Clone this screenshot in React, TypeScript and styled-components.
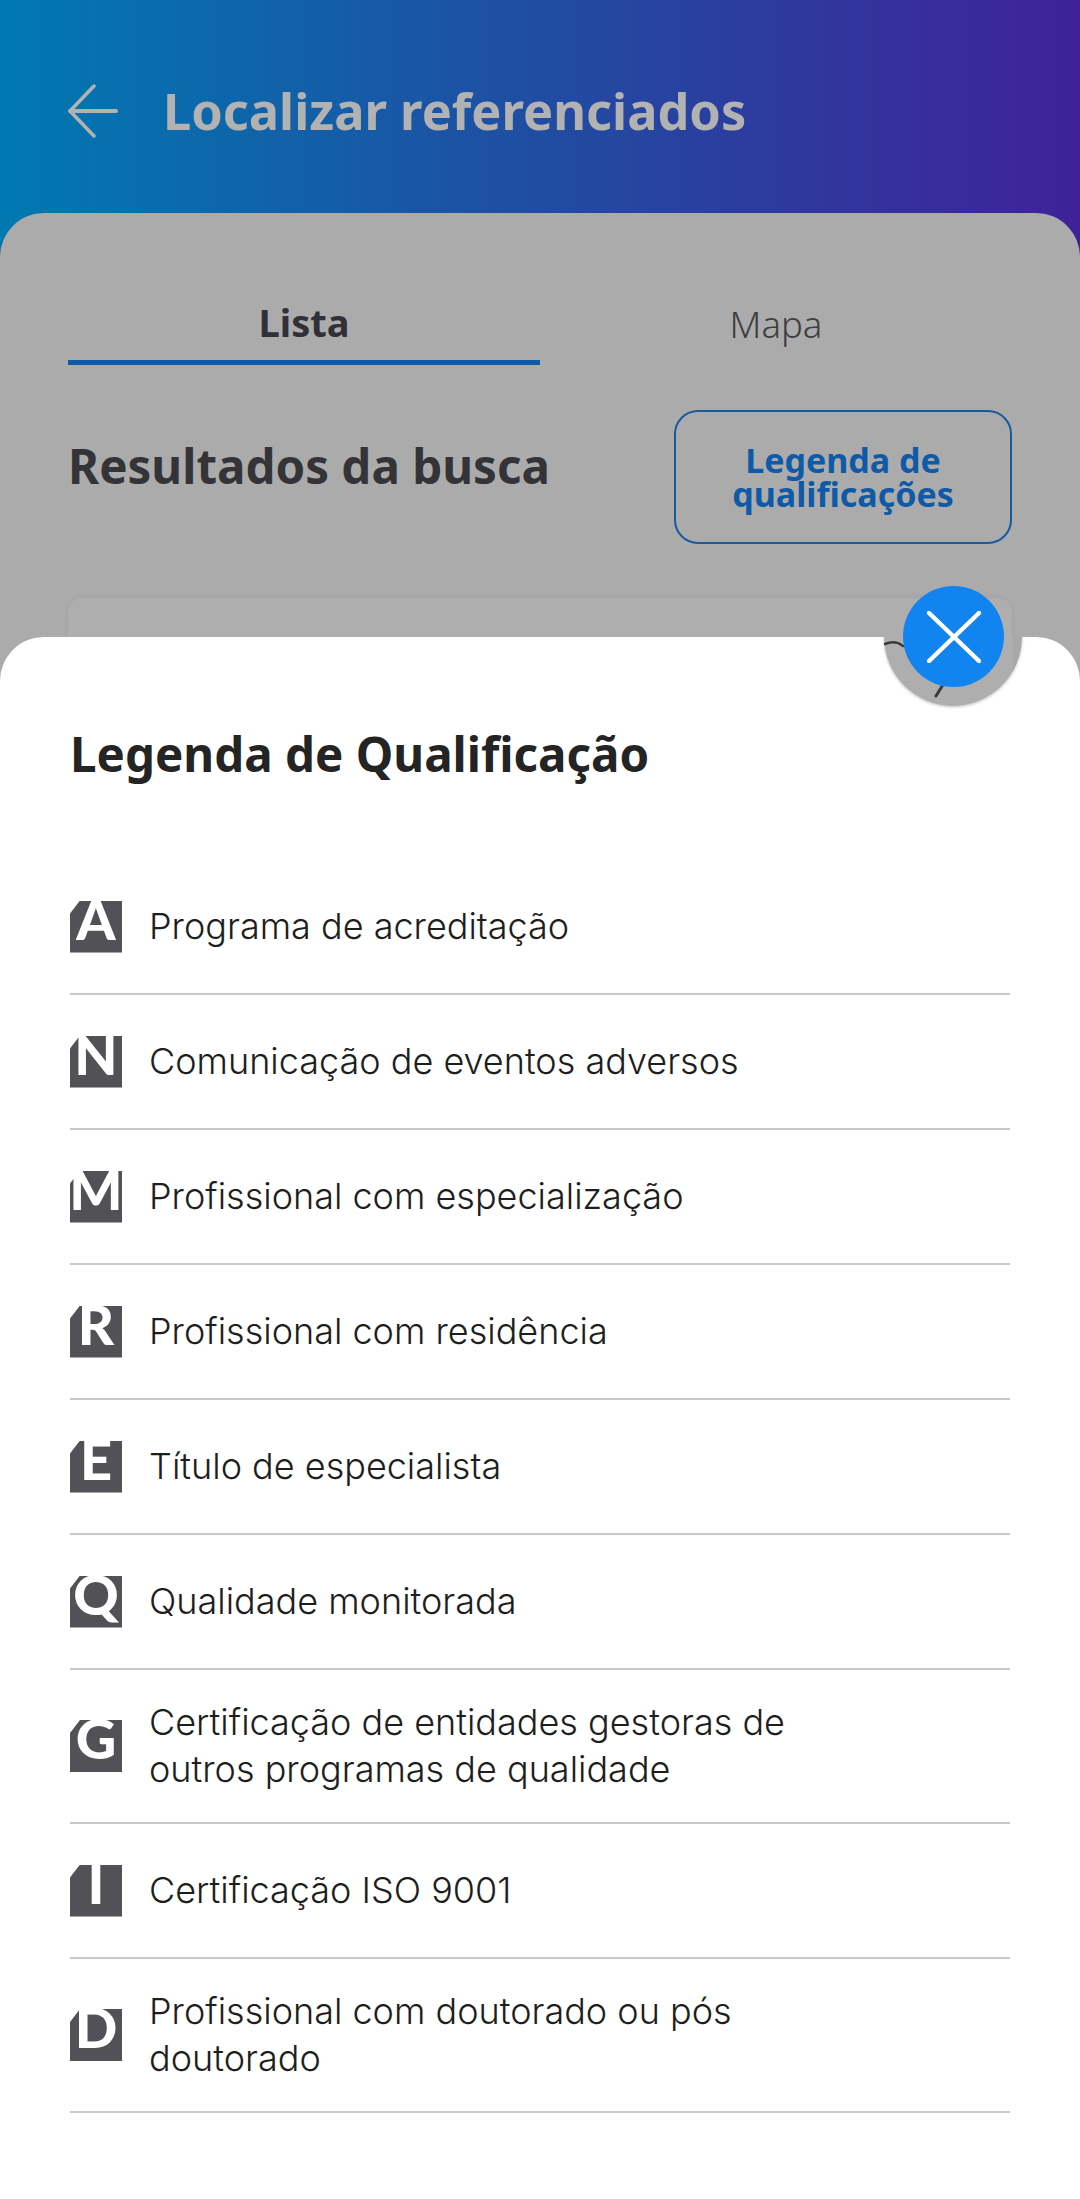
import React from 'react';
import styled, { createGlobalStyle } from 'styled-components';

const qualifications = [
  { letter: 'A', label: 'Programa de acreditação' },
  { letter: 'N', label: 'Comunicação de eventos adversos' },
  { letter: 'M', label: 'Profissional com especialização' },
  { letter: 'R', label: 'Profissional com residência' },
  { letter: 'E', label: 'Título de especialista' },
  { letter: 'Q', label: 'Qualidade monitorada' },
  { letter: 'G', label: 'Certificação de entidades gestoras de outros programas de qualidade' },
  { letter: 'I', label: 'Certificação ISO 9001' },
  { letter: 'D', label: 'Profissional com doutorado ou pós doutorado' },
];

const App: React.FC = () => {
  return (
    <Page>
      <GlobalStyle />
      <Header>
        <svg width="50" height="54" viewBox="0 0 50 54" fill="none" stroke="#b2b2b2" strokeWidth="3.5" strokeLinecap="round" strokeLinejoin="round">
          <path d="M26 2 L2 27 L26 52" />
          <path d="M2 27 H48" strokeWidth="4" />
        </svg>
        <HeaderTitle>Localizar referenciados</HeaderTitle>
      </Header>

      <Panel>
        <Tabs>
          <Tab $active>Lista</Tab>
          <Tab>Mapa</Tab>
        </Tabs>
        <ResultsRow>
          <ResultsTitle>Resultados da busca</ResultsTitle>
          <LegendButton>Legenda de qualificações</LegendButton>
        </ResultsRow>
        <ResultCard />
      </Panel>

      <Sheet>
        <Halo>
          <svg width="138" height="138" viewBox="0 0 138 138" fill="none" stroke="#3a3a3c" strokeWidth="2.5" strokeLinecap="round">
            <path d="M1 76 C8 73 14 74 19 78" />
            <path d="M52 128 L60 115" strokeWidth="3" />
          </svg>
        </Halo>
        <SheetTitle>Legenda de Qualificação</SheetTitle>
        <List>
          {qualifications.map((item) => (
            <Row key={item.letter}>
              <Badge>
                <BadgeLetter>{item.letter}</BadgeLetter>
              </Badge>
              <RowLabel>{item.label}</RowLabel>
            </Row>
          ))}
        </List>
      </Sheet>

      <CloseButton aria-label="Fechar">
        <svg width="54" height="52" viewBox="0 0 54 52" fill="none" stroke="#fff" strokeWidth="4.5" strokeLinecap="round">
          <path d="M2 2 L52 50" />
          <path d="M52 2 L2 50" />
        </svg>
      </CloseButton>
    </Page>
  );
};

const GlobalStyle = createGlobalStyle`
  html, body {
    margin: 0;
    padding: 0;
  }

  body {
    font-family: "Noto Sans", sans-serif;
  }
`;

const Page = styled.div`
  position: relative;
  display: flex;
  flex-direction: column;
  width: 1080px;
  height: 2199px;
  overflow: hidden;
  background: linear-gradient(90deg, #0079b0 0%, #1a55a5 40%, #3f2298 100%);
`;

const Header = styled.header`
  display: flex;
  align-items: center;
  gap: 45px;
  height: 213px;
  padding: 8px 68px 0;
  box-sizing: border-box;
  flex-shrink: 0;
`;

const HeaderTitle = styled.h1`
  margin: 0;
  font-family: "Noto Sans", sans-serif;
  font-size: 50.5px;
  font-weight: 700;
  color: #b2b2b2;
`;

const Panel = styled.main`
  flex: 1;
  display: flex;
  flex-direction: column;
  padding: 78px 68px 0;
  background: #ababab;
  border-radius: 44px 44px 0 0;
`;

const Tabs = styled.div`
  display: grid;
  grid-template-columns: 1fr 1fr;
`;

const Tab = styled.div<{ $active?: boolean }>`
  height: 74px;
  box-sizing: border-box;
  text-align: center;
  line-height: ${({ $active }) => ($active ? 62 : 66)}px;
  font-size: ${({ $active }) => ($active ? 38 : 36.5)}px;
  font-weight: ${({ $active }) => ($active ? 700 : 300)};
  color: ${({ $active }) => ($active ? '#303036' : '#3e3e42')};
  border-bottom: 5px solid ${({ $active }) => ($active ? '#0f5aa7' : 'transparent')};
`;

const ResultsRow = styled.div`
  display: flex;
  align-items: center;
  justify-content: space-between;
  margin-top: 45px;
`;

const ResultsTitle = styled.h2`
  margin: 0 0 24px;
  font-size: 47.5px;
  font-weight: 700;
  color: #343438;
`;

const LegendButton = styled.button`
  width: 338px;
  height: 134px;
  padding: 0 30px;
  box-sizing: border-box;
  border: 2px solid #175a9e;
  border-radius: 24px;
  background: transparent;
  font-family: "Noto Sans", sans-serif;
  font-size: 34px;
  font-weight: 700;
  line-height: 34px;
  color: #0f5aa7;
`;

const ResultCard = styled.div`
  height: 400px;
  margin-top: 54px;
  background: #aeaeae;
  border-radius: 14px;
  box-shadow: 0 0 6px rgba(0, 0, 0, 0.06);
`;

const Sheet = styled.section`
  position: absolute;
  left: 0;
  right: 0;
  bottom: 0;
  height: 1562px;
  padding: 0 70px;
  box-sizing: border-box;
  overflow: hidden;
  background: #fff;
  border-radius: 44px 44px 0 0;
`;

const Halo = styled.div`
  position: absolute;
  top: -69px;
  left: 884px;
  width: 138px;
  height: 138px;
  border-radius: 50%;
  background: linear-gradient(90deg, #aeaeae 0 129px, #a8a8a8 129px);
  box-shadow: 0 1px 3px rgba(0, 0, 0, 0.25);
`;

const SheetTitle = styled.h2`
  margin: 0;
  padding-top: 87px;
  font-size: 47.5px;
  line-height: 60px;
  font-weight: 700;
  color: #242424;
`;

const List = styled.ul`
  margin: 76px 0 0;
  padding: 0;
  list-style: none;
`;

const Row = styled.li`
  display: flex;
  align-items: center;
  gap: 27px;
  min-height: 135px;
  padding: 29px 0;
  box-sizing: border-box;
  border-bottom: 2px solid #c8c8cc;
`;

const Badge = styled.div`
  position: relative;
  display: flex;
  justify-content: center;
  width: 52px;
  height: 52px;
  flex-shrink: 0;

  &::before {
    content: '';
    position: absolute;
    inset: 0;
    background: #515156;
    clip-path: polygon(10px 0, 100% 0, 100% 100%, 0 100%, 0 13px);
  }
`;

const BadgeLetter = styled.span`
  position: relative;
  font-family: Lato, sans-serif;
  font-size: 56px;
  font-weight: 900;
  line-height: 36px;
  color: #fff;
`;

const RowLabel = styled.span`
  max-width: 680px;
  font-family: Inter, sans-serif;
  font-size: 36px;
  font-weight: 300;
  line-height: 47px;
  color: #1e1e1e;
`;

const CloseButton = styled.button`
  position: absolute;
  top: 586px;
  left: 903px;
  display: flex;
  align-items: center;
  justify-content: center;
  width: 101px;
  height: 101px;
  padding: 0;
  border: none;
  border-radius: 50%;
  background: #1184ef;
`;

export default App;
